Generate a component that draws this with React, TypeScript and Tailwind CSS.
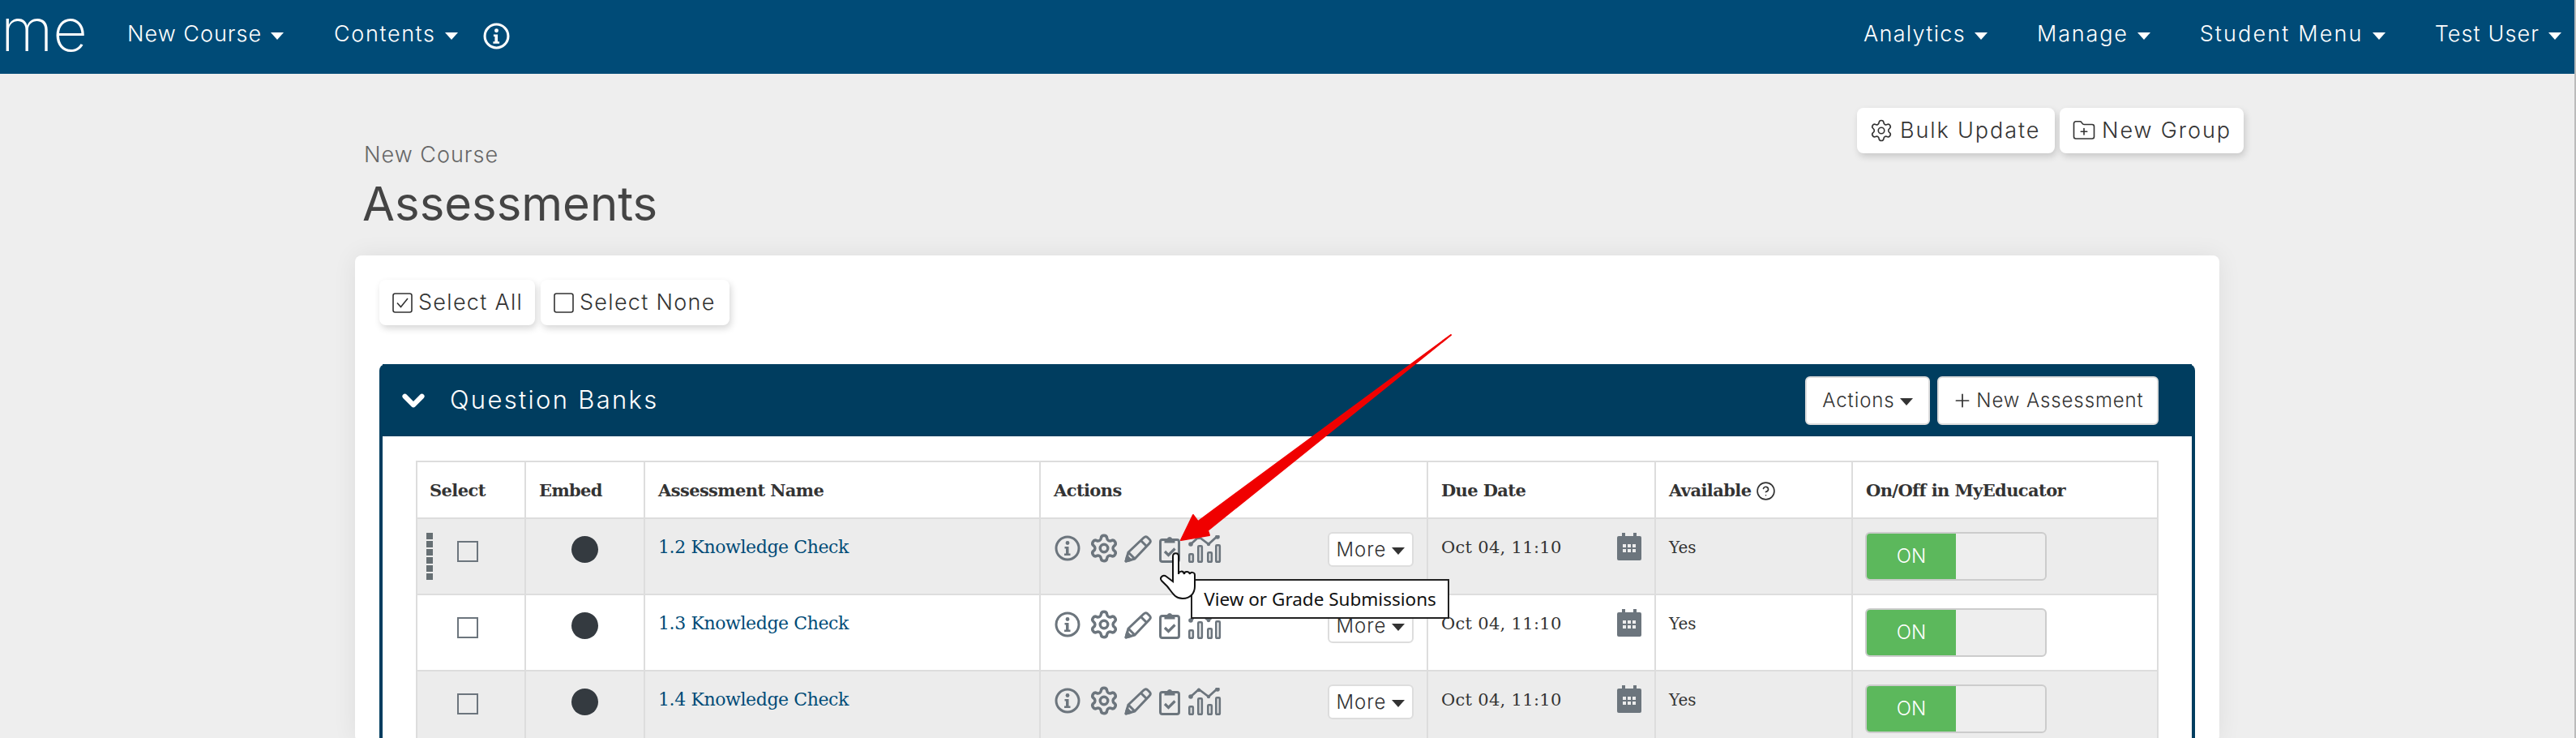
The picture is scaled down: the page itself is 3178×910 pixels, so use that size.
import { ChevronDown, CircleHelp, FolderPlus, Plus, Settings } from "lucide-react";
import type { ReactNode } from "react";

const sans = "font-['Inter',sans-serif]";
const serif = "font-['DejaVu_Serif',serif]";
const columns = "grid-cols-[134px_147px_488px_478px_281px_243px_375px]";

function Caret({ className = "" }: { className?: string }) {
  return (
    <span
      className={`inline-block h-0 w-0 border-x-[8px] border-t-[9px] border-x-transparent border-t-current ${className}`}
    />
  );
}

function InfoIcon({ size = 32, stroke = 3 }: { size?: number; stroke?: number }) {
  return (
    <svg width={size} height={size} viewBox="0 0 32 32" fill="none">
      <circle cx="16" cy="16" r={16 - stroke / 2 - 0.5} stroke="currentColor" strokeWidth={stroke} />
      <circle cx="16" cy="9.500" r="2.400" fill="currentColor" />
      <path d="M12.500 14h5v8.500h2V25h-7.500v-2.500h2v-6h-1.500z" fill="currentColor" />
    </svg>
  );
}

function PencilIcon() {
  return (
    <svg width="34" height="34" viewBox="0 0 34 34" fill="none" stroke="currentColor" strokeWidth="3" strokeLinejoin="round">
      <path d="M2 32 5 21 24 3c2-1.800 3.500-1.800 5 0l2 2c1.800 1.800 1.800 3.300 0 5L13 29z" />
      <path d="M20.500 6.500 27.500 13.500M5 21l8 8" />
      <path d="M2 32l1.500-6 4.500 4.500z" fill="currentColor" />
    </svg>
  );
}

function ClipboardIcon() {
  return (
    <svg width="26" height="34" viewBox="0 0 26 34" fill="none">
      <rect x="1.500" y="5.500" width="23" height="27" rx="2.500" stroke="currentColor" strokeWidth="3" />
      <path d="M6.500 4.500h3.200a3.400 3.400 0 0 1 6.600 0h3.200v5h-13z" fill="currentColor" />
      <path d="M7 20l4.500 4.500 8-8" stroke="currentColor" strokeWidth="3.200" />
    </svg>
  );
}

function BoxIcon({ checked }: { checked?: boolean }) {
  return (
    <svg width="25" height="25" viewBox="0 0 25 25" fill="none" stroke="currentColor" strokeWidth="1.600">
      <rect x="1" y="1" width="23" height="23" rx="2.500" />
      {checked ? <path d="M6 12.500l4.500 5L19 7" /> : null}
    </svg>
  );
}

function NavItem({ label, className = "" }: { label: string; className?: string }) {
  return (
    <div className={`flex items-center gap-[11px] ${className}`}>
      <span className="text-[27px] leading-none font-light">{label}</span>
      <Caret className="mt-[7px]" />
    </div>
  );
}

function PillButton({ children, className = "" }: { children: ReactNode; className?: string }) {
  return (
    <div
      className={`flex h-[56px] items-center rounded-[8px] bg-white text-[27px] font-light text-[#333] shadow-[2px_4px_8px_rgba(0,0,0,0.16)] ${className}`}
    >
      {children}
    </div>
  );
}

function ChartIcon() {
  return (
    <svg width="42" height="34" viewBox="0 0 42 34" fill="none">
      <path d="M4 11 14 2l12 9L37 1" stroke="currentColor" strokeWidth="2.800" />
      <circle cx="4" cy="11" r="2.800" fill="currentColor" />
      <circle cx="14" cy="3" r="2.200" fill="currentColor" />
      <circle cx="26" cy="11" r="2.200" fill="currentColor" />
      <circle cx="37" cy="2" r="2.800" fill="currentColor" />
      <rect x="2.300" y="23.300" width="4.500" height="9.500" rx="1" stroke="currentColor" strokeWidth="2.600" />
      <rect x="13.300" y="13.300" width="4.500" height="19.500" rx="1" stroke="currentColor" strokeWidth="2.600" />
      <rect x="25.300" y="21.300" width="4.500" height="11.500" rx="1" stroke="currentColor" strokeWidth="2.600" />
      <rect x="35.300" y="12.300" width="4.500" height="20.500" rx="1" stroke="currentColor" strokeWidth="2.600" />
    </svg>
  );
}

function CalendarIcon() {
  return (
    <svg width="30" height="34" viewBox="0 0 30 34" fill="currentColor">
      <rect x="6" y="0" width="4" height="7" />
      <rect x="20" y="0" width="4" height="7" />
      <path d="M0 6a2 2 0 0 1 2-2h26a2 2 0 0 1 2 2v26a2 2 0 0 1-2 2H2a2 2 0 0 1-2-2z" />
      <path
        fill="#ececec"
        d="M7 14h4v4H7zM13 14h4v4h-4zM19 14h4v4h-4zM7 20h4v4H7zM13 20h4v4h-4zM19 20h4v4h-4z"
      />
    </svg>
  );
}

const cell = "border-r-2 border-[#ddd]";

function Row({ name, shaded, drag }: { name: string; shaded?: boolean; drag?: boolean }) {
  return (
    <div className={`grid h-[94px] ${columns} border-b-2 border-[#ddd] ${shaded ? "bg-[#ececec]" : "bg-white"}`}>
      <div className={`${cell} relative flex items-start pt-[27px] pl-[49px]`}>
        {drag ? (
          <div className="absolute top-[17px] left-[11px] flex flex-col gap-[2px]">
            {[0, 1, 2, 3, 4, 5].map((i) => (
              <span key={i} className="h-[8px] w-[8px] bg-[#666f73]" />
            ))}
          </div>
        ) : null}
        <span className="h-[26px] w-[26px] border-2 border-[#6c757d] bg-transparent" />
      </div>
      <div className={`${cell} flex justify-center pt-[21px]`}>
        <span className="h-[33px] w-[33px] rounded-full bg-[#343a40]" />
      </div>
      <div className={`${cell} pt-[21px] pl-[16px] text-[22px] leading-[28px] tracking-[-0.4px] text-[#004b77] ${serif}`}>
        {name}
      </div>
      <div className={`${cell} relative flex items-start pt-[20px] pl-[17px] text-[#6c757d]`}>
        <div className="flex items-start">
          <InfoIcon />
          <Settings size={38} strokeWidth={2.200} className="-mt-[3px] ml-[10px]" />
          <span className="ml-[6px]">
            <PencilIcon />
          </span>
          <span className="ml-[9px]">
            <ClipboardIcon />
          </span>
          <span className="ml-[9px]">
            <ChartIcon />
          </span>
        </div>
        <div
          className={`mt-[-4px] mr-[16px] ml-auto flex h-[43px] w-[106px] items-center justify-center gap-[7px] rounded-[6px] border-2 border-[#ddd] bg-white text-[24px] font-light tracking-[1px] text-[#333] ${sans}`}
        >
          More
          <Caret className="mt-[3px]" />
        </div>
      </div>
      <div className={`${cell} flex items-start justify-between pt-[21px] pr-[16px] pl-[16px] text-[#6c757d]`}>
        <span className={`text-[21px] leading-[28px] tracking-[0.3px] text-[#333] ${serif}`}>Oct 04, 11:10</span>
        <span className="-mt-[4px]">
          <CalendarIcon />
        </span>
      </div>
      <div className={`${cell} pt-[21px] pl-[16px] text-[20px] leading-[28px] text-[#333] ${serif}`}>Yes</div>
      <div className="pt-[16px] pl-[15px]">
        <div className="flex h-[60px] w-[224px] overflow-hidden rounded-[6px] border-2 border-[#ccc] bg-[#eee]">
          <div className={`flex w-[110px] items-center justify-center bg-[#5cb85c] text-[24px] font-light text-white ${sans}`}>
            ON
          </div>
        </div>
      </div>
    </div>
  );
}

export default function App() {
  const headCell = `${cell} flex items-center pt-[2px] text-[21px] font-bold tracking-[-0.6px] text-[#333] ${serif}`;

  return (
    <div className={`relative h-[910px] w-[3178px] overflow-hidden bg-[#eee] ${sans}`}>
      <nav className="flex h-[91px] items-center justify-between bg-[#004b77] pb-[9px] text-white">
        <div className="flex items-center">
          <span className="-mt-[10px] ml-[1px] w-[150px] text-[74px] leading-[70px] font-extralight">me</span>
          <NavItem label="New Course" className="ml-[6px] tracking-[1px]" />
          <NavItem label="Contents" className="ml-[62px] tracking-[1.600px]" />
          <span className="mt-[7px] ml-[31px]">
            <InfoIcon size={33} />
          </span>
        </div>
        <div className="flex items-center gap-[61px] pr-[18px]">
          <NavItem label="Analytics" className="tracking-[1.350px]" />
          <NavItem label="Manage" className="tracking-[1.800px]" />
          <NavItem label="Student Menu" className="tracking-[2.150px]" />
          <NavItem label="Test User" className="tracking-[1.100px]" />
        </div>
      </nav>

      <main className="ml-[438px] w-[2330px]">
        <div className="flex h-[224px] items-start justify-between pt-[42px]">
          <div className="pt-[43px] pl-[11px]">
            <div className="text-[27px] leading-[30px] font-light tracking-[1px] text-[#666]">New Course</div>
            <div className="mt-[13px] -ml-[2px] text-[58px] leading-[64px] font-normal text-[#444]">Assessments</div>
          </div>
          <div className="flex gap-[6px] tracking-[1.900px]">
            <PillButton className="w-[244px] pl-[15px]">
              <Settings size={30} strokeWidth={1.300} />
              <span className="ml-[8px]">Bulk Update</span>
            </PillButton>
            <PillButton className="w-[227px] pl-[15px]">
              <FolderPlus size={30} strokeWidth={1.300} />
              <span className="ml-[7px]">New Group</span>
            </PillButton>
          </div>
        </div>

        <div className="h-[600px] w-[2300px] rounded-[8px] bg-white px-[30px] pt-[30px] shadow-[0_0_30px_rgba(0,0,0,0.07)]">
          <div className="flex gap-[7px] tracking-[1.300px]">
            <PillButton className="w-[192px] pl-[16px]">
              <BoxIcon checked />
              <span className="ml-[7px]">Select All</span>
            </PillButton>
            <PillButton className="w-[233px] pl-[16px]">
              <BoxIcon />
              <span className="ml-[7px]">Select None</span>
            </PillButton>
          </div>

          <section className="mt-[48px] rounded-t-[8px] border-x-4 border-[#003d5f] bg-white">
            <div className="flex h-[89px] items-center bg-[#003d5f] pr-[41px] text-white">
              <ChevronDown size={42} strokeWidth={3.500} className="ml-[17px]" />
              <span className="ml-[24px] text-[31px] font-light tracking-[2.300px]">Question Banks</span>
              <div className="ml-auto flex gap-[9px] text-[24px] font-light tracking-[0.900px] text-[#333]">
                <div className="flex h-[60px] w-[154px] items-center justify-center gap-[6px] rounded-[6px] border-2 border-[#ddd] bg-white">
                  Actions
                  <Caret className="mt-[3px]" />
                </div>
                <div className="flex h-[60px] w-[273px] items-center justify-center gap-[4px] rounded-[6px] border-2 border-[#ddd] bg-white">
                  <Plus size={26} strokeWidth={1.600} />
                  New Assessment
                </div>
              </div>
            </div>

            <div className="mt-[30px] ml-[41px] w-[2150px] border-x-2 border-t-2 border-[#ddd]">
              <div className={`grid h-[70px] ${columns} border-b-2 border-[#ddd]`}>
                <div className={`${headCell} pl-[15px]`}>Select</div>
                <div className={`${headCell} pl-[16px]`}>Embed</div>
                <div className={`${headCell} pl-[16px]`}>Assessment Name</div>
                <div className={`${headCell} pl-[16px]`}>Actions</div>
                <div className={`${headCell} pl-[16px]`}>Due Date</div>
                <div className={`${headCell} gap-[6px] pl-[16px]`}>
                  Available
                  <CircleHelp size={25} strokeWidth={1.600} />
                </div>
                <div className={`flex items-center pt-[2px] pl-[16px] text-[21px] font-bold tracking-[-0.6px] text-[#333] ${serif}`}>
                  On/Off in MyEducator
                </div>
              </div>
              <Row name="1.2 Knowledge Check" shaded drag />
              <Row name="1.3 Knowledge Check" />
              <Row name="1.4 Knowledge Check" shaded />
            </div>
          </section>
        </div>
      </main>

      <div className="absolute top-0 right-0 h-full w-[2px] bg-[#bbb]" />

      <div className="absolute top-[714px] left-[1469px] flex h-[49px] w-[319px] items-center justify-center border-2 border-[#222] bg-white font-['Noto_Sans',sans-serif] text-[22.500px] text-[#111]">
        View or Grade Submissions
      </div>

      <svg className="absolute top-0 left-0" width="3178" height="910" viewBox="0 0 3178 910" fill="none">
        <path
          d="M1790 413 1490 654 1492 660 1457 666 1472 635 1478 643Z"
          fill="#f00000"
          stroke="#f00000"
          strokeWidth="2"
          strokeLinejoin="round"
        />
        <path
          d="M1447 686c0-5 7-5 7 0v22c0-4 6-5 7 0 0-4 6-4 7 0 0-3 6-3 6 1v14c0 8-5 15-15 15-10 0-13-8-19-15l-7-7c-3-4 2-8 6-5l8 6z"
          fill="#fff"
          stroke="#111"
          strokeWidth="2"
        />
      </svg>
    </div>
  );
}
